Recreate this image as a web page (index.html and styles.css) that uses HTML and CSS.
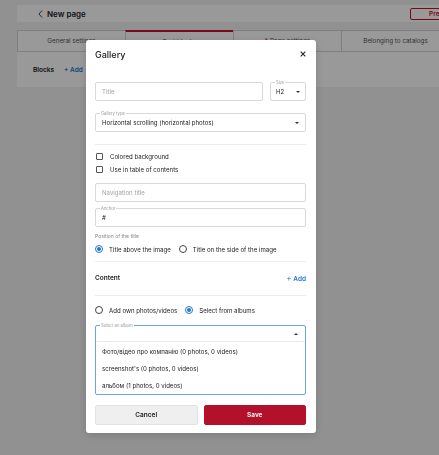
FILE: index.html
```html
<!DOCTYPE html>
<html lang="en">
<head>
  <meta charset="UTF-8" />
  <meta name="viewport" content="width=device-width, initial-scale=1.0" />
  <title>New page - Gallery</title>
  <link rel="stylesheet" href="styles.css">
</head>
<body>
  <div class="page">
    <header class="topbar">
      <svg class="back" width="5" height="8" viewBox="0 0 5 8"><path d="M4 0.5 L1 4 L4 7.5" fill="none" stroke="#333" stroke-width="0.9"/></svg>
      <span class="page-title">New page</span>
      <button class="btn-outline">Preview</button>
    </header>

    <nav class="tabs">
      <div class="tab">General settings</div>
      <div class="tab active">Text blocks</div>
      <div class="tab"><span class="req">*</span> Page settings</div>
      <div class="tab">Belonging to catalogs</div>
    </nav>

    <section class="blocks">
      <span class="blocks-title">Blocks</span>
      <a class="link-add">+ Add</a>
    </section>
  </div>

  <div class="overlay"></div>

  <div class="modal">
    <div class="modal-head">
      <span class="modal-title">Gallery</span>
      <svg class="close" width="6" height="6" viewBox="0 0 6 6"><path d="M0.7 0.7 L5.3 5.3 M5.3 0.7 L0.7 5.3" stroke="#222" stroke-width="1.1"/></svg>
    </div>

    <div class="modal-body">
      <div class="row-title">
        <div class="field grow"><span class="placeholder">Title</span></div>
        <div class="field size">
          <span class="legend">Size</span>
          <span class="value">H2</span>
          <span class="caret"></span>
        </div>
      </div>

      <div class="field mt12">
        <span class="legend">Gallery type</span>
        <span class="value">Horizontal scrolling (horizontal photos)</span>
        <span class="caret"></span>
      </div>

      <div class="divider first"></div>

      <label class="check"><span class="box"></span>Colored background</label>
      <label class="check"><span class="box"></span>Use in table of contents</label>

      <div class="field nav-title"><span class="placeholder">Navigation title</span></div>
      <div class="field anchor">
        <span class="legend">Anchor</span>
        <span class="value">#</span>
      </div>

      <div class="small-label">Position of the title</div>
      <div class="radios pos">
        <label class="radio on"><span class="dot"></span>Title above the image</label>
        <label class="radio"><span class="dot"></span>Title on the side of the image</label>
      </div>

      <div class="divider d2"></div>

      <div class="content-row">
        <span class="content-title">Content</span>
        <a class="link-add"><span class="plus">+</span> Add</a>
      </div>

      <div class="divider d3"></div>

      <div class="radios src">
        <label class="radio"><span class="dot"></span>Add own photos/videos</label>
        <label class="radio on"><span class="dot"></span>Select from albums</label>
      </div>

      <div class="select-open">
        <span class="legend">Select an album</span>
        <div class="select-head"><span class="caret up"></span></div>
        <ul class="options">
          <li>Фото/відео про компанію (0 photos, 0 videos)</li>
          <li>screenshot's (0 photos, 0 videos)</li>
          <li>альбом (1 photos, 0 videos)</li>
        </ul>
      </div>

      <div class="actions">
        <button class="btn cancel">Cancel</button>
        <button class="btn save">Save</button>
      </div>
    </div>
  </div>
</body>
</html>
```

FILE: styles.css
```css
body {
  margin: 0;
  font-family: Inter, 'Noto Sans', sans-serif;
  background-color: #f2f2f2;
  color: #222;
  overflow: hidden;
  height: 455px;
}

.page {
  width: 460px;
  padding: 5px 0 0 17px;
}

.topbar {
  height: 17px;
  background: #fff;
  display: flex;
  align-items: center;
  padding: 0 7px 0 21px;
}

.back {
  margin-right: 4px;
}

.page-title {
  font-size: 8px;
  font-weight: 600;
}

.btn-outline {
  margin-left: auto;
  width: 60px;
  height: 12px;
  padding: 0 0 0 18px;
  text-align: left;
  border: 1px solid #c8102e;
  border-radius: 2px;
  background: #fff;
  color: #c8102e;
  font-family: inherit;
  font-size: 6.5px;
  font-weight: 600;
}

.tabs {
  margin-top: 8px;
  display: grid;
  grid-template-columns: repeat(4, 108px);
  height: 22px;
  background: #fff;
  border-top: 1px solid #d4d4d4;
  border-bottom: 1px solid #d4d4d4;
  box-sizing: border-box;
}

.tab {
  display: flex;
  align-items: center;
  justify-content: center;
  font-size: 6.3px;
  color: #555;
  border-left: 1px solid #d4d4d4;
}

.tab.active {
  border-top: 2px solid #c8102e;
  margin-top: -1px;
}

.req {
  color: #c8102e;
  margin-right: 2px;
}

.blocks {
  height: 35px;
  background: #fff;
  display: flex;
  align-items: center;
  padding-left: 16px;
  font-size: 6.5px;
  font-weight: 600;
}

.blocks-title {
  margin-right: 10px;
}

.link-add {
  color: #1f78d1;
  font-weight: 600;
  font-size: 6.5px;
}

.plus {
  font-weight: 400;
  font-size: 8px;
}

.overlay {
  position: fixed;
  inset: 0;
  background: rgba(0, 0, 0, 0.4);
}

/* modal */

.modal {
  position: fixed;
  left: 86px;
  top: 40px;
  width: 230px;
  background: #fff;
  border-radius: 3px;
  padding-bottom: 8px;
  box-shadow: 0 2px 8px rgba(0, 0, 0, 0.15);
}

.modal-head {
  height: 28px;
  display: flex;
  align-items: center;
  justify-content: space-between;
  padding: 0 10px 0 9px;
}

.modal-title {
  font-size: 9px;
  font-weight: 500;
}

.modal-body {
  padding: 14px 10px 0 9px;
  font-size: 6.1px;
}

.row-title {
  display: flex;
  gap: 7px;
}

.field {
  position: relative;
  height: 19px;
  border: 1px solid #d9d9d9;
  border-radius: 2px;
  box-sizing: border-box;
  display: flex;
  align-items: center;
  padding: 0 6px;
}

.field.grow {
  flex: 1;
}

.field.size {
  width: 36px;
  padding: 0 5px;
}

.placeholder {
  color: #a3a3a3;
}

.value {
  color: #222;
}

.legend {
  position: absolute;
  top: -3px;
  left: 4px;
  font-size: 4.2px;
  line-height: 5px;
  color: #9a9a9a;
  background: #fff;
  padding: 0 1px;
}

.caret {
  margin-left: auto;
  width: 0;
  height: 0;
  border-left: 2px solid transparent;
  border-right: 2px solid transparent;
  border-top: 2px solid #333;
}

.caret.up {
  border-top: 0;
  border-bottom: 2px solid #333;
}

.mt12 {
  margin-top: 12px;
}

.divider {
  height: 1px;
  background: #ececec;
}

.divider.first {
  margin: 12px 0 5px;
}

.check {
  display: flex;
  align-items: center;
  height: 13px;
}

.box {
  width: 7px;
  height: 7px;
  border: 1px solid #555;
  border-radius: 1px;
  box-sizing: border-box;
  margin: 0 7px 0 1px;
}

.nav-title {
  margin-top: 7px;
}

.anchor {
  margin-top: 6px;
}

.small-label {
  margin-top: 6px;
  font-size: 5px;
  line-height: 7px;
  color: #888;
}

.radios {
  display: flex;
  gap: 8px;
  height: 12px;
}

.radios.pos {
  margin-top: 3px;
}

.radios.src {
  margin-top: 8px;
}

.radio {
  display: flex;
  align-items: center;
}

.dot {
  width: 8px;
  height: 8px;
  border: 1px solid #444;
  border-radius: 50%;
  box-sizing: border-box;
  margin-right: 6px;
  display: flex;
  align-items: center;
  justify-content: center;
}

.radio.on .dot {
  border-color: #1f78d1;
}

.radio.on .dot::after {
  content: '';
  width: 4px;
  height: 4px;
  border-radius: 50%;
  background: #1f78d1;
}

.divider.d2 {
  margin-top: 6px;
}

.content-row {
  display: flex;
  justify-content: space-between;
  align-items: center;
  height: 12px;
  margin-top: 10px;
}

.content-title {
  font-size: 6.5px;
  font-weight: 600;
}

.divider.d3 {
  margin-top: 11px;
}

.select-open {
  position: relative;
  margin-top: 9px;
  border: 1px solid #6aa5e6;
  border-radius: 2px;
}

.select-head {
  height: 15px;
  display: flex;
  align-items: center;
  padding: 0 7px 0 6px;
  border-bottom: 1px solid #eaeaea;
}

.options {
  list-style: none;
  margin: 0;
  padding: 1px 0 0;
}

.options li {
  height: 17px;
  line-height: 17px;
  padding-left: 6px;
}

.actions {
  display: grid;
  grid-template-columns: 1fr 1fr;
  gap: 6px;
  margin-top: 10px;
}

.btn {
  height: 20px;
  border-radius: 2px;
  font-family: inherit;
  font-size: 6.5px;
  font-weight: 600;
  padding: 0;
}

.btn.cancel {
  background: #efefef;
  border: 1px solid #e2e2e2;
  color: #222;
}

.btn.save {
  background: #b3112b;
  border: 1px solid #b3112b;
  color: #fff;
}
```
